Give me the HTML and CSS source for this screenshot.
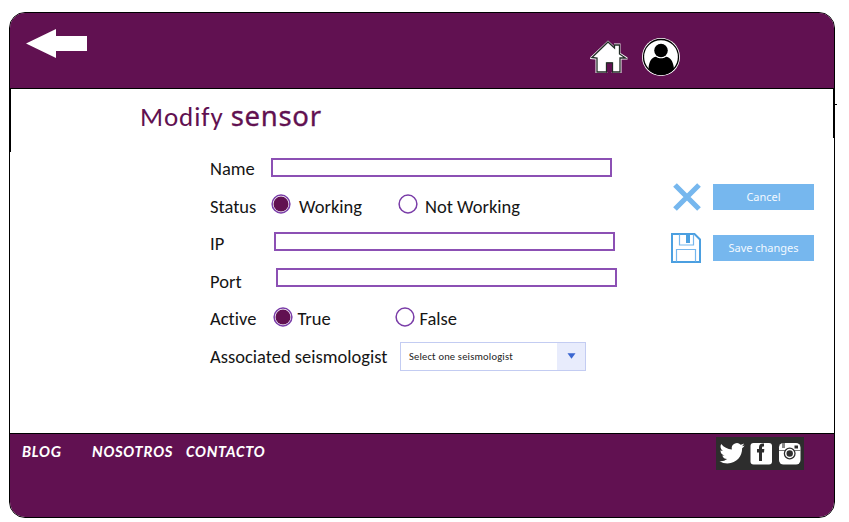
FILE: index.html
```html
<!DOCTYPE html>
<html lang="en">
<head>
<meta charset="utf-8">
<title>Modify sensor</title>
<link rel="stylesheet" href="styles.css">
</head>
<body>
<div class="frame">
  <header class="header">
    <svg class="back" width="61" height="30" viewBox="0 0 61 30"><path d="M0 14.5 30 0v7h31v15H30v7z" fill="#fff"/></svg>
    <div class="header-icons">
      <svg width="38" height="34" viewBox="0 0 38 34"><path d="M0 19 .5 17 18 .5l6 5.500V3.500h6.500v9.500l7 4.500v2h-6V33h-10v-8h-4v8h-12V19.500z" fill="#fff"/><path d="M2 17.500 18 2l6.500 6V5h5v9l6 4h-5.500v14h-7.500v-9h-6v9H7V18z" fill="#fff" stroke="#222c26" stroke-width="1.300"/><path d="M16.500 32.500v-9.500h6v9.500" fill="#611151" stroke="#222c26"/></svg>
      <svg width="38" height="38" viewBox="0 0 38 38"><circle cx="19" cy="19" r="19" fill="#fff"/><circle cx="19" cy="19" r="17.500" fill="#fff" stroke="#000" stroke-width="1.300"/><circle cx="19" cy="12.500" r="6.800"/><path d="M6.500 31c.3-7.500 3.500-12 7.500-12.200 3 2 7 2 10 0 4 .2 7.500 4.700 8 12.200-6.500 8-19 8-25.500 0z"/></svg>
    </div>
  </header>
  <main class="main">
    <form class="form">
      <h1 class="title">Modify <span>sensor</span></h1>
      <div class="row"><label class="name">Name</label><input class="field" type="text"></div>
      <div class="row"><span class="label">Status</span><svg class="radio on" viewBox="0 0 20 20"><circle class="ring" cx="10" cy="10" r="8.900"/><circle class="dot" cx="10" cy="10" r="7.500"/></svg><span class="option working">Working</span><svg class="radio" viewBox="0 0 20 20"><circle class="ring" cx="10" cy="10" r="8.900"/></svg><span class="option not-working">Not Working</span></div>
      <div class="row"><label class="ip">IP</label><input class="field field-ip" type="text"></div>
      <div class="row"><label class="port">Port</label><input class="field field-port" type="text"></div>
      <div class="row"><span class="label active">Active</span><svg class="radio on" viewBox="0 0 20 20"><circle class="ring" cx="10" cy="10" r="8.900"/><circle class="dot" cx="10" cy="10" r="7.500"/></svg><span class="option true">True</span><svg class="radio" viewBox="0 0 20 20"><circle class="ring" cx="10" cy="10" r="8.900"/></svg><span class="option false">False</span></div>
      <div class="row"><span class="seismo">Associated seismologist</span><div class="select"><span>Select one seismologist</span><b><svg width="9" height="6" viewBox="0 0 9 6"><path d="M.5 .3h8L4.500 5.800z" fill="#3a66d0"/></svg></b></div></div>
    </form>
    <div class="actions">
      <div class="action"><svg width="30" height="30" viewBox="0 0 30 30"><path d="M4 3l24 24M28 3 4 27" stroke="#76b7ee" stroke-width="5.200"/></svg><button type="button" class="cancel">Cancel</button></div>
      <div class="action"><svg width="30" height="30" viewBox="0 0 30 30" fill="none" stroke="#4b9fe0"><path d="M1 1h22.500L29 6.500V29H1z" stroke-width="2"/><path d="M8.500 1.500V12h14V1.500M5.500 28.500v-12h19v12" stroke="#76b7ee" stroke-width="1.200"/><path d="M15 2h4v8h-4z" fill="#4b9fe0" stroke="none"/></svg><button type="button" class="save">Save changes</button></div>
    </div>
  </main>
  <footer class="footer">
    <nav class="links"><a class="blog">BLOG</a><a class="nosotros">NOSOTROS</a><a class="contacto">CONTACTO</a></nav>
    <svg class="social" width="88" height="33" viewBox="0 0 88 33">
      <path d="M0 0h88v33H0z" fill="#2d2d2d"/>
      <path transform="translate(3.500 3.700) scale(1.050)" fill="#fff" d="M23.950 4.570a10 10 0 0 1-2.820.770 4.960 4.960 0 0 0 2.160-2.720c-.95.550-2 .950-3.130 1.180a4.920 4.920 0 0 0-8.380 4.480C7.690 8.090 4.070 6.130 1.640 3.160a4.820 4.820 0 0 0-.67 2.480c0 1.710.870 3.210 2.190 4.100a4.900 4.900 0 0 1-2.230-.620v.060a4.920 4.920 0 0 0 3.950 4.830 5 5 0 0 1-2.210.080 4.940 4.940 0 0 0 4.600 3.420A9.870 9.870 0 0 1 0 19.540a13.990 13.990 0 0 0 7.550 2.210c9.050 0 14-7.500 14-13.980 0-.210 0-.420-.020-.630a9.940 9.940 0 0 0 2.420-2.570z"/>
      <rect x="34.500" y="6" width="21.500" height="21.500" rx="3" fill="#fff"/>
      <path d="M43 24v-8.500h-2V12h2v-1.500c0-3 1.500-4.300 5-4v3c-1.900-.1-2 .2-2 2.500h2.300l-.3 3.500h-2V24z" fill="#2d2d2d"/>
      <rect x="63" y="6" width="21.500" height="21.500" rx="4.500" fill="#fff"/>
      <path d="M63 13.500h21.500" stroke="#777"/>
      <path d="M66 6h3v5h-3z" fill="#888"/><path d="M78.500 8.500h3.500v3h-3.500z" fill="#2d2d2d"/>
      <circle cx="73.700" cy="16.500" r="5.300" fill="#fff" stroke="#2d2d2d" stroke-width="1.300"/><circle cx="73.700" cy="16.500" r="3.200" fill="#2d2d2d"/>
    </svg>
  </footer>
</div>
</body>
</html>
```
FILE: styles.css
```css
* { box-sizing: border-box; }
body { margin: 0; padding: 12px 0 0 9px; background: #fff; font-family: Carlito, Lato, sans-serif; font-variant-ligatures: none; overflow: hidden; }
/* small tick on the outer right edge of the frame */
body::after { content: ""; position: absolute; left: 835px; top: 104px; width: 2px; height: 1px; background: #000; }
.frame { width: 826px; height: 506px; border: 1px solid #000; border-radius: 16px; overflow: hidden; display: flex; flex-direction: column; }
.header { height: 76px; flex: none; background: #611151; border-bottom: 1px solid #000; display: flex; justify-content: space-between; padding: 16px 154px 0 16px; }
.header-icons { display: flex; gap: 14px; align-items: center; height: 38px; margin-top: 9px; }
.main { flex: 1; display: flex; background: linear-gradient(#000, #000) 0 0 / 1px 63px no-repeat, linear-gradient(#000, #000) 100% 0 / 1px 49px no-repeat; }
.form { width: 661px; padding-left: 200px; }
.title { margin: 11px 0 19px -70px; height: 31px; line-height: 31px; font-size: 27px; font-weight: 400; color: #611151; letter-spacing: .9px; white-space: nowrap; }
.title span { font: 27.500px/31px "Noto Sans", sans-serif; letter-spacing: .7px; -webkit-text-stroke: .3px #611151; }
.row { display: flex; align-items: center; height: 37.500px; font-size: 18.500px; color: #151515; white-space: nowrap; }
.name { width: 61px; }
.ip { width: 64px; }
.port { width: 66px; }
.field { width: 341px; height: 19px; margin: 0 0 3px; padding: 0 4px; border: 2px solid #8c50b4; border-radius: 0; background: #fff; }
.field-ip { margin-bottom: 5px; }
.field-port { margin-bottom: 7px; }
.label { width: 61px; }
.active { width: 62.500px; }
.radio { width: 20px; height: 20px; margin: 0 -1px 4px 0; flex: none; }
.ring { fill: #fff; stroke: #7a3da8; stroke-width: 1.500px; }
.dot { fill: #611151; }
.working { width: 108px; padding-left: 9px; }
.not-working { padding-left: 8px; }
.true { width: 103px; padding-left: 6px; }
.false { padding-left: 6px; }
.seismo { width: 190px; }
.select { width: 186px; height: 29px; border: 1px solid #c3ccf2; display: flex; font-size: 10.500px; letter-spacing: .2px; line-height: 27px; color: #222; }
.select span { flex: 1; padding-left: 8px; }
.select b { width: 28px; background: #e8ecfc; display: flex; align-items: center; justify-content: center; }
.actions { padding-top: 93px; }
.action { display: flex; align-items: center; gap: 12px; height: 30px; margin-bottom: 21px; }
.action button { width: 101px; height: 26px; padding: 0 0 2px; border: 0; background: #76b7ee; color: #f2f9ff; font: 11px "Noto Sans", sans-serif; }
.footer { height: 84px; flex: none; background: #611151; border-top: 1px solid #000; display: flex; justify-content: space-between; padding: 3px 30px 0 12px; }
.links { display: flex; padding-top: 6px; font-size: 16px; letter-spacing: .9px; line-height: 18px; font-weight: 700; font-style: italic; color: #fff; }
.blog { width: 70px; }
.nosotros { width: 94px; }
```
